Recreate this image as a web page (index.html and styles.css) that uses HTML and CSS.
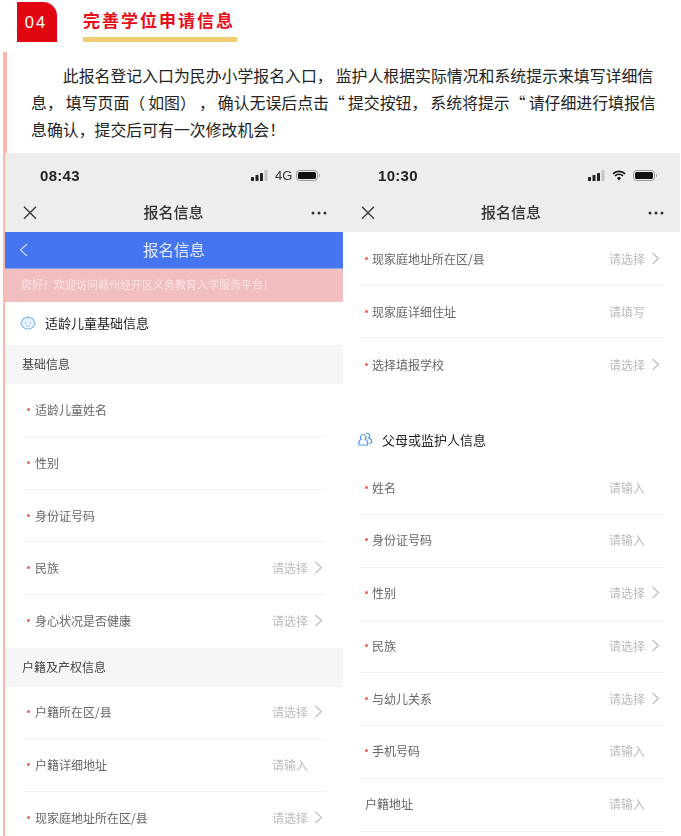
FILE: index.html
```html
<!DOCTYPE html>
<html lang="zh-CN">
<head>
<meta charset="utf-8">
<title>完善学位申请信息</title>
<link rel="stylesheet" href="styles.css">
</head>
<body>
<header class="head">
  <div class="num">04</div>
  <h1 class="title">完善学位申请信息</h1>
</header>
<section class="section">
  <p class="intro">此报名登记入口为民办小学报名入口， 监护人根据实际情况和系统提示来填写详细信息， 填写页面（ 如图） ， 确认无误后点击“ 提交按钮， 系统将提示“ 请仔细进行填报信息确认，提交后可有一次修改机会！</p>
  <div class="phones">
    <div class="phone phone-a">
      <div class="status">
        <span class="time">08:43</span>
        <span class="status-icons">
          <svg class="signal" width="17" height="11" viewBox="0 0 17 11"><rect x="0" y="7" width="3" height="4" rx=".6" fill="#222"/><rect x="4.500" y="5" width="3" height="6" rx=".6" fill="#222"/><rect x="9" y="3" width="3" height="8" rx=".6" fill="#222"/><rect x="13.500" y="0" width="3" height="11" rx=".6" fill="#c4c4c4"/></svg>
          <span class="net">4G</span>
          <svg class="battery" width="24" height="11" viewBox="0 0 24 11"><rect x=".5" y=".5" width="21" height="10" rx="3" fill="none" stroke="#999"/><rect x="2" y="2" width="18" height="7" rx="1.600" fill="#111"/><path d="M23 3.800c.6.300 1 1 1 1.700s-.4 1.400-1 1.700z" fill="#999"/></svg>
        </span>
      </div>
      <div class="nav">
        <svg class="close" width="16" height="14" viewBox="0 0 16 14"><path d="M2 .8l12 12M14 .8l-12 12" fill="none" stroke="#333" stroke-width="1.300"/></svg>
        <span class="nav-title">报名信息</span>
        <svg class="more" width="16" height="4" viewBox="0 0 16 4"><circle cx="2" cy="2" r="1.500" fill="#333"/><circle cx="8" cy="2" r="1.500" fill="#333"/><circle cx="14" cy="2" r="1.500" fill="#333"/></svg>
      </div>
      <div class="blue">
        <svg class="back" width="9" height="14" viewBox="0 0 9 14"><path d="M8 1L1.500 7 8 13" fill="none" stroke="#cfdcff" stroke-width="1.100"/></svg>
        <span class="blue-title">报名信息</span>
      </div>
      <div class="notice">您好！欢迎访问赣州经开区义务教育入学服务平台！</div>
      <div class="heading heading-a">
        <svg width="16" height="15" viewBox="0 0 16 15"><path d="M8 2.500c3.500 0 6 2.200 6.300 5 1 .3 1.200 1.700 0 2.200C13.600 12 11.200 14 8 14s-5.600-2-6.300-4.300c-1.200-.5-1-1.900 0-2.200C2 4.700 4.500 2.500 8 2.500z" fill="#eaf4fd" stroke="#7db8ea" stroke-width="1.100"/><path d="M7.500 2.500C7 1.500 7.800.7 9 1" fill="none" stroke="#7db8ea"/><circle cx="5.500" cy="8" r=".8" fill="#7db8ea"/><circle cx="10.500" cy="8" r=".8" fill="#7db8ea"/><path d="M6.300 10.700c1 .8 2.400.8 3.400 0" fill="none" stroke="#7db8ea" stroke-width=".9"/></svg>
        <span>适龄儿童基础信息</span>
      </div>
      <div class="group">基础信息</div>
      <div class="row row-low"><i class="dot"></i><span class="label">适龄儿童姓名</span></div>
      <div class="row row-low"><i class="dot"></i><span class="label">性别</span></div>
      <div class="row row-low"><i class="dot"></i><span class="label">身份证号码</span></div>
      <div class="row"><i class="dot"></i><span class="label">民族</span><span class="value">请选择</span><svg class="chev" width="7" height="13" viewBox="0 0 7 13"><path d="M.5 1l6 5.500L.5 12" fill="none" stroke="#bbb" stroke-width="1.100"/></svg></div>
      <div class="row row-end"><i class="dot"></i><span class="label">身心状况是否健康</span><span class="value">请选择</span><svg class="chev" width="7" height="13" viewBox="0 0 7 13"><path d="M.5 1l6 5.500L.5 12" fill="none" stroke="#bbb" stroke-width="1.100"/></svg></div>
      <div class="group">户籍及产权信息</div>
      <div class="row"><i class="dot"></i><span class="label">户籍所在区/县</span><span class="value">请选择</span><svg class="chev" width="7" height="13" viewBox="0 0 7 13"><path d="M.5 1l6 5.500L.5 12" fill="none" stroke="#bbb" stroke-width="1.100"/></svg></div>
      <div class="row"><i class="dot"></i><span class="label">户籍详细地址</span><span class="value value-plain">请输入</span></div>
      <div class="row"><i class="dot"></i><span class="label">现家庭地址所在区/县</span><span class="value">请选择</span><svg class="chev" width="7" height="13" viewBox="0 0 7 13"><path d="M.5 1l6 5.500L.5 12" fill="none" stroke="#bbb" stroke-width="1.100"/></svg></div>
    </div>
    <div class="phone phone-b">
      <div class="status">
        <span class="time">10:30</span>
        <span class="status-icons">
          <svg class="signal" width="17" height="11" viewBox="0 0 17 11"><rect x="0" y="7" width="3" height="4" rx=".6" fill="#222"/><rect x="4.500" y="5" width="3" height="6" rx=".6" fill="#222"/><rect x="9" y="3" width="3" height="8" rx=".6" fill="#222"/><rect x="13.500" y="0" width="3" height="11" rx=".6" fill="#c4c4c4"/></svg>
          <svg class="wifi" width="14" height="11" viewBox="0 0 15 11"><path d="M1 3.800a9.200 9.200 0 0 1 13 0M3.200 6a6 6 0 0 1 8.600 0" fill="none" stroke="#111" stroke-width="1.800"/><path d="M5.300 8.200a3 3 0 0 1 4.400 0L7.500 10.800z" fill="#111"/></svg>
          <svg class="battery" width="24" height="11" viewBox="0 0 24 11"><rect x=".5" y=".5" width="21" height="10" rx="3" fill="none" stroke="#999"/><rect x="2" y="2" width="18" height="7" rx="1.600" fill="#111"/><path d="M23 3.800c.6.300 1 1 1 1.700s-.4 1.400-1 1.700z" fill="#999"/></svg>
        </span>
      </div>
      <div class="nav">
        <svg class="close" width="16" height="14" viewBox="0 0 16 14"><path d="M2 .8l12 12M14 .8l-12 12" fill="none" stroke="#333" stroke-width="1.300"/></svg>
        <span class="nav-title">报名信息</span>
        <svg class="more" width="16" height="4" viewBox="0 0 16 4"><circle cx="2" cy="2" r="1.500" fill="#333"/><circle cx="8" cy="2" r="1.500" fill="#333"/><circle cx="14" cy="2" r="1.500" fill="#333"/></svg>
      </div>
      <div class="row row-top"><i class="dot"></i><span class="label">现家庭地址所在区/县</span><span class="value">请选择</span><svg class="chev" width="7" height="13" viewBox="0 0 7 13"><path d="M.5 1l6 5.500L.5 12" fill="none" stroke="#bbb" stroke-width="1.100"/></svg></div>
      <div class="row row-top"><i class="dot"></i><span class="label">现家庭详细住址</span><span class="value value-plain">请填写</span></div>
      <div class="row row-top row-end"><i class="dot"></i><span class="label">选择填报学校</span><span class="value">请选择</span><svg class="chev" width="7" height="13" viewBox="0 0 7 13"><path d="M.5 1l6 5.500L.5 12" fill="none" stroke="#bbb" stroke-width="1.100"/></svg></div>
      <div class="heading heading-b">
        <svg width="15" height="14" viewBox="0 0 15 14"><path d="M1 13c-.5-3 .6-5 2.200-5.700C1.800 5.800 2.500 2.500 5.200 2.500s3.400 3.300 2 4.800C9 8 10 10 9.600 13z" fill="none" stroke="#4a9cf5" stroke-width="1.200" stroke-linejoin="round"/><path d="M8.200 1.500c2.300-1 4.300 1.500 3 3.500-.3.500-.6.700-.6.900 2 .7 3.400 2.500 3 4.600-.2.500-1 .9-2.200.9" fill="none" stroke="#4a9cf5" stroke-width="1.200"/></svg>
        <span>父母或监护人信息</span>
      </div>
      <div class="row"><i class="dot"></i><span class="label">姓名</span><span class="value value-plain">请输入</span></div>
      <div class="row"><i class="dot"></i><span class="label">身份证号码</span><span class="value value-plain">请输入</span></div>
      <div class="row"><i class="dot"></i><span class="label">性别</span><span class="value">请选择</span><svg class="chev" width="7" height="13" viewBox="0 0 7 13"><path d="M.5 1l6 5.500L.5 12" fill="none" stroke="#bbb" stroke-width="1.100"/></svg></div>
      <div class="row"><i class="dot"></i><span class="label">民族</span><span class="value">请选择</span><svg class="chev" width="7" height="13" viewBox="0 0 7 13"><path d="M.5 1l6 5.500L.5 12" fill="none" stroke="#bbb" stroke-width="1.100"/></svg></div>
      <div class="row"><i class="dot"></i><span class="label">与幼儿关系</span><span class="value">请选择</span><svg class="chev" width="7" height="13" viewBox="0 0 7 13"><path d="M.5 1l6 5.500L.5 12" fill="none" stroke="#bbb" stroke-width="1.100"/></svg></div>
      <div class="row"><i class="dot"></i><span class="label">手机号码</span><span class="value value-plain">请输入</span></div>
      <div class="row"><span class="label">户籍地址</span><span class="value value-plain">请输入</span></div>
    </div>
  </div>
</section>
</body>
</html>
```

FILE: styles.css
```css
* { box-sizing: border-box; }
html, body { margin: 0; height: 836px; overflow: hidden; background: #fff; }
body { font-family: "Noto Sans CJK SC", "Liberation Sans", sans-serif; color: #333; text-spacing-trim: space-all; }

.head { display: flex; gap: 26px; height: 40px; margin: 2px 0 0 17px; }
.num {
  width: 40px; height: 40px; padding: 1px 2px 0 0; background: #e20612; color: #fff;
  border-top-right-radius: 14px; display: flex; align-items: center; justify-content: center;
  font: 16.500px "Liberation Sans", sans-serif; letter-spacing: 2px;
}
.title {
  margin: 0; width: 154px; height: 40px; border-bottom: 5px solid #f0cd72;
  font-size: 17px; line-height: 35px; font-weight: 700; color: #e60c18; letter-spacing: 2px; white-space: nowrap;
}

.section { margin: 10px 0 0 3px; border-left: 4px solid #fcb9aa; height: 784px; }
.intro {
  margin: 0; padding: 10px 0 10px 24px; width: 652px; font-size: 15.880px; line-height: 27px;
  text-indent: 2em; word-spacing: -.5px; color: #222;
}
.phones { display: grid; grid-template-columns: 338px 337px; margin-left: -2px; filter: blur(.4px); }
.phone { background: #fff; overflow: hidden; }

.status {
  height: 40px; padding: 5px 23px 0 35px; background: #ededed; display: flex; align-items: center; justify-content: space-between;
}
.time { font: 700 15px "Liberation Sans", sans-serif; color: #222; letter-spacing: .3px; }
.status-icons { display: flex; align-items: center; gap: 7px; }
.phone-a .battery { margin-left: -2px; }
.net { font: 400 13px "Liberation Sans", sans-serif; color: #333; width: 16px; }
.status-icons svg { display: block; }

.nav {
  height: 39px; padding: 0 16px 0 17px; background: #ededed; display: flex; align-items: center; justify-content: space-between;
}
.nav-title { font-size: 15px; font-weight: 500; color: #333; padding: 0 2px 2px 0; }

.blue {
  height: 37px; padding-bottom: 2px; background: #4575f0; border-bottom: 1px solid #8ea8ee; position: relative;
  display: flex; align-items: center; justify-content: center;
}
.back { position: absolute; left: 14px; top: 11px; }
.blue-title { font-size: 15.500px; color: #e6ecff; }
.notice {
  height: 33px; background: #f2bfc0; color: #fbe3e3; font-size: 11px; line-height: 31px; padding-left: 16px;
}

.heading { display: flex; align-items: center; gap: 9px; height: 43px; padding: 0 0 2px 15px; font-size: 13px; color: #222; }
.heading-b { height: 44px; margin-top: 28px; }

.group {
  height: 39px; background: #f5f6f8; padding-left: 17px; font-size: 12px; line-height: 37px; color: #444;
}
.phone-a .row { margin-left: 18px; }

.row {
  display: flex; align-items: center; height: 52.750px; width: 303px; margin-left: 17px;
  padding: 0 4px 2px; border-bottom: 1px solid #f1f1f1; font-size: 12px; color: #666;
}
.row-low { padding-bottom: 0; }
.row-top { padding-top: 2px; padding-bottom: 0; }
.row-end { border-bottom: 0; }
.phone-b .row { padding-left: 5px; }
.dot { width: 3px; height: 3px; border-radius: 50%; background: #e8606a; margin-right: 5px; flex: none; }
.phone-b .dot { background: #f45a5a; margin-right: 4px; }
.value { margin-left: auto; color: #bbb; }
.value-plain { margin-right: 14px; }
.chev { margin-left: 7px; flex: none; }
```
